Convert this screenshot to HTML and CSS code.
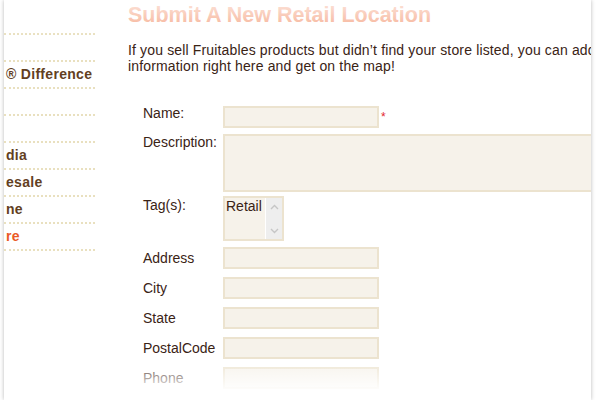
FILE: index.html
```html
<!DOCTYPE html>
<html lang="en">
<head>
<meta charset="utf-8">
<title>Submit A New Retail Location</title>
<link rel="stylesheet" href="styles.css">
</head>
<body>
<div class="frame">
  <aside class="sidenav">
    <div class="nav-item nav-first"></div>
    <div class="nav-item"></div>
    <div class="nav-item">® Difference</div>
    <div class="nav-item"></div>
    <div class="nav-item"></div>
    <div class="nav-item">dia</div>
    <div class="nav-item">esale</div>
    <div class="nav-item">ne</div>
    <div class="nav-item active">re</div>
  </aside>
  <main class="content">
    <h1 class="title">Submit A New Retail Location</h1>
    <p class="intro">If you sell Fruitables products but didn’t find your store listed, you can add your store information right here and get on the map!</p>
    <form class="store-form">
      <div class="row row-name">
        <label class="label">Name:</label>
        <input class="text-input" type="text"><span class="req">*</span>
      </div>
      <div class="row row-desc">
        <label class="label">Description:</label>
        <textarea class="text-area"></textarea>
      </div>
      <div class="row row-tags">
        <label class="label">Tag(s):</label>
        <div class="listbox">
          <div class="list-text">Retail</div>
          <div class="list-scroll">
            <div class="scroll-btn">
              <svg width="9" height="6" viewBox="0 0 9 6"><path d="M1 5 L4.5 1.5 L8 5" fill="none" stroke="#c6c6c6" stroke-width="1.4"/></svg>
            </div>
            <div class="scroll-btn">
              <svg width="9" height="6" viewBox="0 0 9 6"><path d="M1 1 L4.5 4.5 L8 1" fill="none" stroke="#c6c6c6" stroke-width="1.4"/></svg>
            </div>
          </div>
        </div>
      </div>
      <div class="row row-mid">
        <label class="label">Address</label>
        <input class="text-input" type="text">
      </div>
      <div class="row row-mid">
        <label class="label">City</label>
        <input class="text-input" type="text">
      </div>
      <div class="row row-mid">
        <label class="label">State</label>
        <input class="text-input" type="text">
      </div>
      <div class="row row-mid">
        <label class="label">PostalCode</label>
        <input class="text-input" type="text">
      </div>
      <div class="row row-mid">
        <label class="label">Phone</label>
        <input class="text-input" type="text">
      </div>
    </form>
  </main>
  <div class="fade-top"></div>
  <div class="fade-bottom"></div>
</div>
</body>
</html>
```

FILE: styles.css
```css
html, body {
  margin: 0;
  padding: 0;
  background: #ffffff;
  overflow: hidden;
}

body {
  width: 600px;
  height: 400px;
  font-family: "Liberation Sans", Arial, sans-serif;
}

.frame {
  position: relative;
  margin-left: 4px;
  width: 587px;
  height: 400px;
  background: #ffffff;
  box-shadow: 0 0 4px rgba(0, 0, 0, 0.28);
  overflow: hidden;
  display: flex;
}

.sidenav {
  width: 91px;
  flex-shrink: 0;
  margin-right: 33px;
  display: flex;
  flex-direction: column;
}

.nav-item {
  height: 25px;
  line-height: 25px;
  border-bottom: 2px dotted #e9e0bf;
  padding-left: 2px;
  font-size: 14px;
  font-weight: bold;
  letter-spacing: 0.3px;
  color: #633f1f;
  white-space: nowrap;
  overflow: hidden;
}

.nav-first {
  height: 33px;
}

.nav-item.active {
  color: #ea5a26;
}

.content {
  width: 560px;
  flex-shrink: 0;
}

.title {
  margin: 0;
  padding-top: 2px;
  font-size: 21.5px;
  line-height: 26px;
  font-weight: bold;
  color: #f5a585;
  white-space: nowrap;
}

.intro {
  margin: 14px 0 0;
  font-size: 14px;
  line-height: 16px;
  letter-spacing: 0.15px;
  color: #3a2315;
}

.store-form {
  margin-top: 32px;
  padding-left: 15px;
  display: flex;
  flex-direction: column;
}

.row {
  display: flex;
  align-items: flex-start;
  margin-bottom: 8px;
}

.row-name {
  margin-bottom: 6px;
}

.row-desc {
  margin-bottom: 4px;
}

.row-tags {
  margin-bottom: 6px;
}

.row-mid {
  align-items: center;
}

.label {
  width: 80px;
  flex-shrink: 0;
  font-size: 14px;
  line-height: 16px;
  color: #3a2315;
}

.row-name .label {
  margin-top: -1px;
}

.row-tags .label {
  margin-top: 1px;
}

.text-input,
.text-area {
  box-sizing: border-box;
  margin: 0;
  border: 2px solid #ece3cf;
  background: #f6f2ea;
  font-family: "Liberation Sans", Arial, sans-serif;
  font-size: 14px;
  padding: 0 4px;
  outline: none;
}

.text-input {
  width: 156px;
  height: 22px;
}

.text-area {
  display: block;
  width: 420px;
  height: 58px;
  resize: none;
}

.req {
  margin-left: 2px;
  font-size: 12px;
  line-height: 22px;
  color: #e3262e;
}

.listbox {
  box-sizing: border-box;
  width: 61px;
  height: 45px;
  border: 2px solid #ece3cf;
  background: #f6f2ea;
  display: flex;
}

.list-text {
  flex: 1;
  padding-left: 1px;
  font-size: 14px;
  line-height: 16px;
  color: #3a2315;
}

.list-scroll {
  width: 16px;
  border-left: 1px solid #ffffff;
  background: #eeeeee;
  display: flex;
  flex-direction: column;
  justify-content: space-between;
}

.scroll-btn {
  height: 17px;
  display: flex;
  align-items: center;
  justify-content: center;
}

.fade-top {
  position: absolute;
  left: 0;
  top: 0;
  width: 100%;
  height: 36px;
  background: linear-gradient(rgba(255, 255, 255, 0.75), rgba(255, 255, 255, 0));
  pointer-events: none;
}

.fade-bottom {
  position: absolute;
  left: 0;
  top: 358px;
  width: 100%;
  height: 42px;
  background: linear-gradient(rgba(255, 255, 255, 0) 0, #ffffff 34px);
  pointer-events: none;
}
```
